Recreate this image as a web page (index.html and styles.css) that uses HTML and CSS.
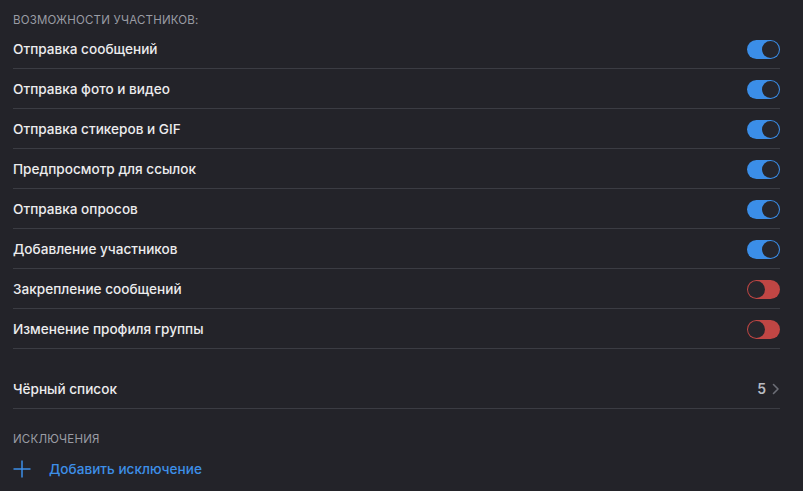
FILE: index.html
```html
<!DOCTYPE html>
<html lang="ru">
<head>
<meta charset="utf-8">
<link rel="stylesheet" href="styles.css">
</head>
<body>
<div class="panel">
  <div class="section-title first">ВОЗМОЖНОСТИ УЧАСТНИКОВ:</div>
  <div class="list">
    <div class="row"><span class="label">Отправка сообщений</span><span class="toggle on"><span class="knob"></span></span></div>
    <div class="row"><span class="label">Отправка фото и видео</span><span class="toggle on"><span class="knob"></span></span></div>
    <div class="row"><span class="label">Отправка стикеров и GIF</span><span class="toggle on"><span class="knob"></span></span></div>
    <div class="row"><span class="label">Предпросмотр для ссылок</span><span class="toggle on"><span class="knob"></span></span></div>
    <div class="row"><span class="label">Отправка опросов</span><span class="toggle on"><span class="knob"></span></span></div>
    <div class="row"><span class="label">Добавление участников</span><span class="toggle on"><span class="knob"></span></span></div>
    <div class="row"><span class="label">Закрепление сообщений</span><span class="toggle off"><span class="knob"></span></span></div>
    <div class="row"><span class="label">Изменение профиля группы</span><span class="toggle off"><span class="knob"></span></span></div>
  </div>
  <div class="list spaced">
    <div class="row"><span class="label">Чёрный список</span><span class="value">5<svg class="chev" width="8" height="12" viewBox="0 0 8 12"><path d="M1.5 1.5 L6 6 L1.5 10.5" fill="none" stroke="#6c6e76" stroke-width="1.6" stroke-linecap="round" stroke-linejoin="round"/></svg></span></div>
  </div>
  <div class="section-title">ИСКЛЮЧЕНИЯ</div>
  <div class="add-row">
    <svg class="plus" width="18" height="18" viewBox="0 0 18 18"><path d="M9 0.5 V17.5 M0.5 9 H17.5" stroke="#3d8fe8" stroke-width="1.5"/></svg>
    <span class="add-label">Добавить исключение</span>
  </div>
</div>
</body>
</html>
```
FILE: styles.css
```css
html, body {
  margin: 0;
  padding: 0;
  background: #232329;
}
body {
  font-family: Inter, "Noto Sans", "Liberation Sans", sans-serif;
  -webkit-font-smoothing: antialiased;
}
.panel {
  padding: 0 23px 0 13px;
}
.section-title {
  font-size: 11.5px;
  color: #9a9ca4;
  letter-spacing: 0.2px;
  height: 20px;
  line-height: 20px;
  padding-top: 20px;
}
.section-title.first {
  padding-top: 11px;
  height: 18px;
  line-height: 18px;
}
.list.spaced {
  margin-top: 20px;
}
.row {
  height: 39px;
  border-bottom: 1px solid #3b3c43;
  display: flex;
  align-items: center;
  justify-content: space-between;
}
.label {
  font-size: 13.6px;
  font-weight: 500;
  color: #ececee;
}
.toggle {
  width: 33px;
  height: 19px;
  border-radius: 10px;
  display: flex;
  align-items: center;
  box-sizing: border-box;
  padding: 0 1px;
  margin-top: 1px;
}
.toggle.on {
  background: #3b8ee8;
  justify-content: flex-end;
}
.toggle.off {
  background: #c04644;
  justify-content: flex-start;
}
.knob {
  width: 17px;
  height: 17px;
  border-radius: 50%;
  background: #26262c;
  box-sizing: border-box;
}
.value {
  display: flex;
  align-items: center;
  gap: 6px;
  font-size: 14px;
  font-weight: 600;
  color: #b9bbc2;
}
.add-row {
  display: flex;
  align-items: center;
  height: 40px;
}
.plus {
  flex: none;
  margin-right: 18px;
}
.add-label {
  flex: 1;
  font-size: 13.6px;
  font-weight: 500;
  color: #3d8fe8;
  height: 39px;
  line-height: 39px;
  border-bottom: 1px solid #3b3c43;
  margin-top: 1px;
}
```
